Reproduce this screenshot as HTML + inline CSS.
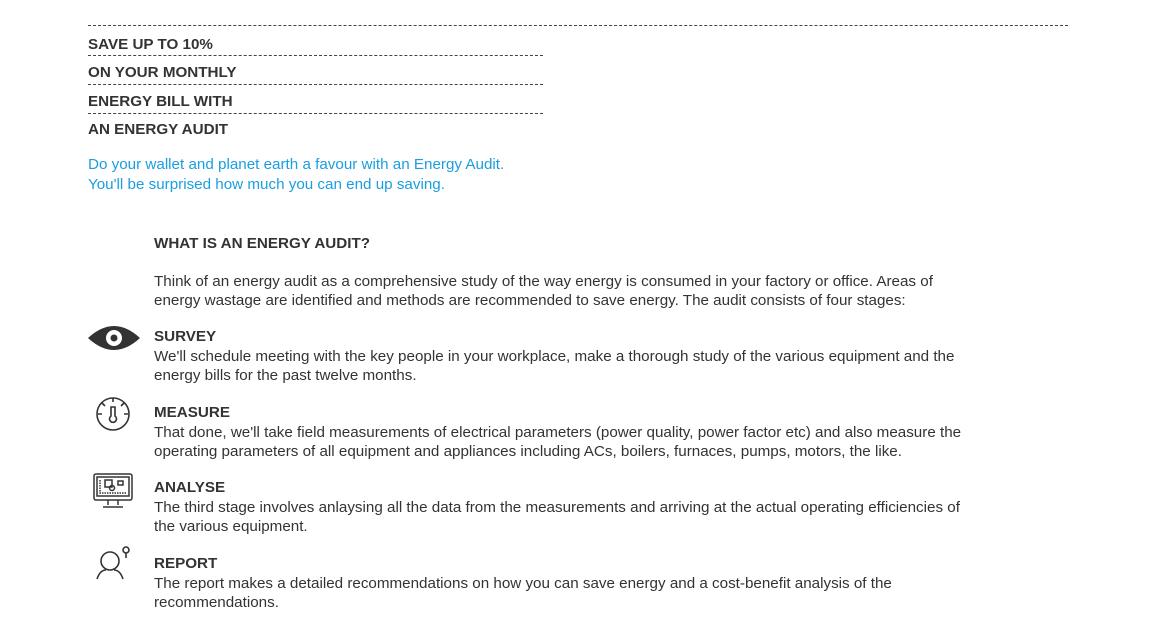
<!DOCTYPE html>
<html><head><style>
body{margin:0;background:#fff;font-family:"Liberation Sans",Arial,sans-serif;color:#333;font-size:15.2px;}
.p{position:absolute;white-space:nowrap;}
.h{font-weight:bold;font-size:15.2px;color:#333;}
.d{position:absolute;height:0;border-top:1px dashed #444;}
.b{color:#1a9ee0;}
</style></head><body>
<div class="d" style="left:88px;top:25px;width:980px"></div>
<div class="p h" style="left:88px;top:36px">SAVE UP TO 10%</div>
<div class="d" style="left:88px;top:55px;width:455px"></div>
<div class="p h" style="left:88px;top:64px">ON YOUR MONTHLY</div>
<div class="d" style="left:88px;top:84px;width:455px"></div>
<div class="p h" style="left:88px;top:93px">ENERGY BILL WITH</div>
<div class="d" style="left:88px;top:113px;width:455px"></div>
<div class="p h" style="left:88px;top:121px">AN ENERGY AUDIT</div>
<div class="p b" style="left:88px;top:155px;line-height:20px">Do your wallet and planet earth a favour with an Energy Audit.<br>You'll be surprised how much you can end up saving.</div>
<div class="p h" style="left:154px;top:235px">WHAT IS AN ENERGY AUDIT?</div>
<div class="p" style="left:154px;top:272px;line-height:19px">Think of an energy audit as a comprehensive study of the way energy is consumed in your factory or office. Areas of<br>energy wastage are identified and methods are recommended to save energy. The audit consists of four stages:</div>

<svg class="p" style="left:86px;top:320px" width="56" height="36" viewBox="0 0 56 36">
<path d="M2 18 Q28 -6 54 18 Q28 42 2 18Z" fill="#333"/><circle cx="28" cy="18" r="8" fill="#fff"/><circle cx="28" cy="18" r="3.5" fill="#333"/></svg>
<div class="p h" style="left:154px;top:328px">SURVEY</div>
<div class="p" style="left:154px;top:347px;line-height:19px">We'll schedule meeting with the key people in your workplace, make a thorough study of the various equipment and the<br>energy bills for the past twelve months.</div>

<svg class="p" style="left:94px;top:395px" width="38" height="38" viewBox="0 0 38 38" fill="none" stroke="#333" stroke-width="1.6">
<circle cx="19" cy="19" r="16"/><path d="M19 3v4M4 19h4M30 19h4M8 8l3 3M30 8l-3 3"/><path d="M17 12v9a3.5 3.5 0 1 0 4 0v-9z"/></svg>
<div class="p h" style="left:154px;top:404px">MEASURE</div>
<div class="p" style="left:154px;top:423px;line-height:19px">That done, we'll take field measurements of electrical parameters (power quality, power factor etc) and also measure the<br>operating parameters of all equipment and appliances including ACs, boilers, furnaces, pumps, motors, the like.</div>

<svg class="p" style="left:92px;top:472px" width="42" height="38" viewBox="0 0 42 38" fill="none" stroke="#333" stroke-width="1.5">
<rect x="2" y="2" width="38" height="26" rx="2"/><rect x="5" y="5" width="32" height="19"/><path d="M16 28v5M26 28v5M11 35h20"/><rect x="13" y="8" width="7" height="7"/><circle cx="20" cy="16" r="2.5"/><rect x="26" y="9" width="5" height="4"/><path d="M8 8v13h26" stroke-dasharray="1.5 1"/></svg>
<div class="p h" style="left:154px;top:479px">ANALYSE</div>
<div class="p" style="left:154px;top:498px;line-height:19px">The third stage involves anlaysing all the data from the measurements and arriving at the actual operating efficiencies of<br>the various equipment.</div>

<svg class="p" style="left:94px;top:545px" width="40" height="36" viewBox="0 0 40 36" fill="none" stroke="#333" stroke-width="1.6">
<circle cx="16" cy="16" r="9"/><path d="M3 34 Q6 25 12 25M29 34 Q26 25 20 25"/><circle cx="32" cy="5" r="3"/><path d="M32 8v5"/></svg>
<div class="p h" style="left:154px;top:555px">REPORT</div>
<div class="p" style="left:154px;top:574px;line-height:19px">The report makes a detailed recommendations on how you can save energy and a cost-benefit analysis of the<br>recommendations.</div>
</body></html>
